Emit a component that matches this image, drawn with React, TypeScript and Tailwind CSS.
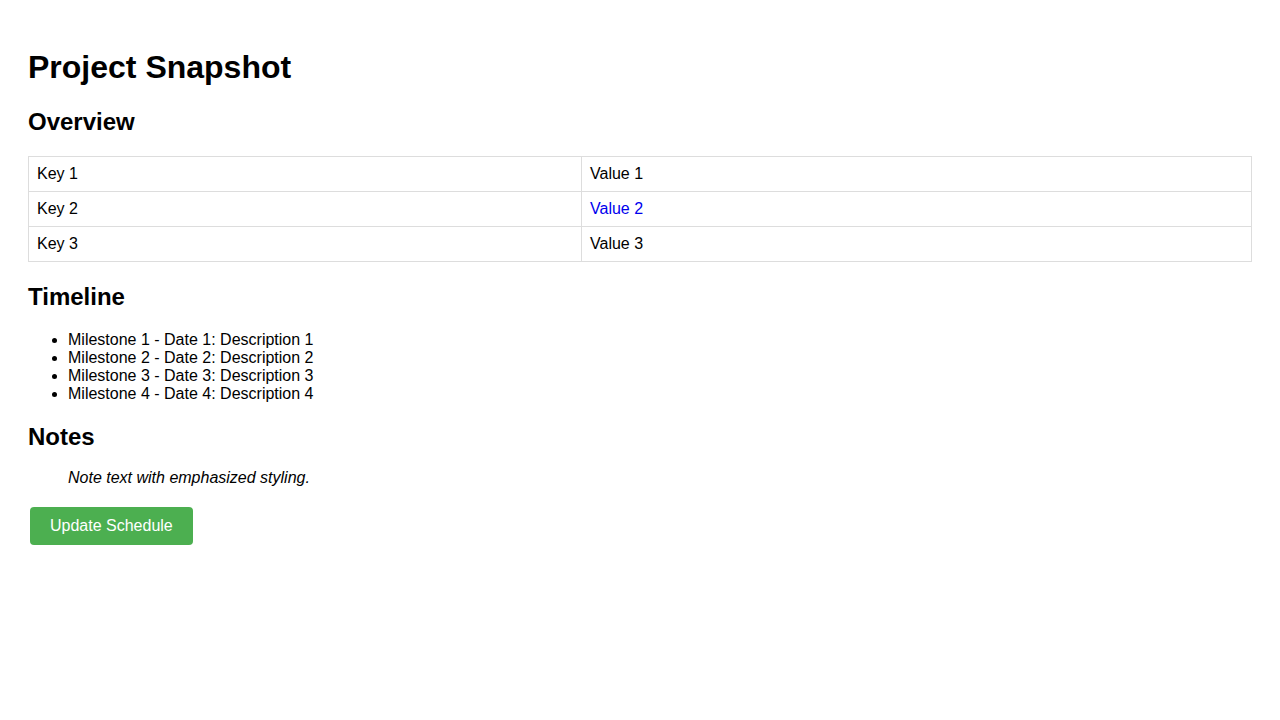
import React from "react";

const rows = [
  { key: "Key 1", value: "Value 1", link: false },
  { key: "Key 2", value: "Value 2", link: true },
  { key: "Key 3", value: "Value 3", link: false },
];

const milestones = [1, 2, 3, 4];

function App() {
  return (
    <div className="min-h-screen bg-white px-[28px] pt-[49px] pb-8 text-black font-['Liberation_Sans',Arial,sans-serif]">
      <h1 className="text-[32px] leading-[37px] font-bold">Project Snapshot</h1>
      <h2 className="mt-[22px] text-[24px] leading-[28px] font-bold">Overview</h2>
      <table className="mt-[20px] w-full border-collapse text-[16px] leading-[18px]">
        <tbody>
          {rows.map((r) => (
            <tr key={r.key}>
              <td className="w-[553px] border border-[#ddd] px-2 py-2">{r.key}</td>
              <td className={"border border-[#ddd] px-2 py-2 " + (r.link ? "text-[#0000ee]" : "")}>
                {r.value}
              </td>
            </tr>
          ))}
        </tbody>
      </table>
      <h2 className="mt-[21px] text-[24px] leading-[28px] font-bold">Timeline</h2>
      <ul className="mt-[20px] list-disc pl-[40px] text-[16px] leading-[18px]">
        {milestones.map((n) => (
          <li key={n}>
            Milestone {n} - Date {n}: Description {n}
          </li>
        ))}
      </ul>
      <h2 className="mt-[20px] text-[24px] leading-[28px] font-bold">Notes</h2>
      <p className="mt-[18px] pl-[40px] text-[16px] leading-[18px] italic">
        Note text with emphasized styling.
      </p>
      <button className="mt-[20px] ml-[2px] rounded-[4px] bg-[#4caf50] px-5 py-[10px] text-[16px] leading-[18px] text-white">
        Update Schedule
      </button>
    </div>
  );
}

export default App;
